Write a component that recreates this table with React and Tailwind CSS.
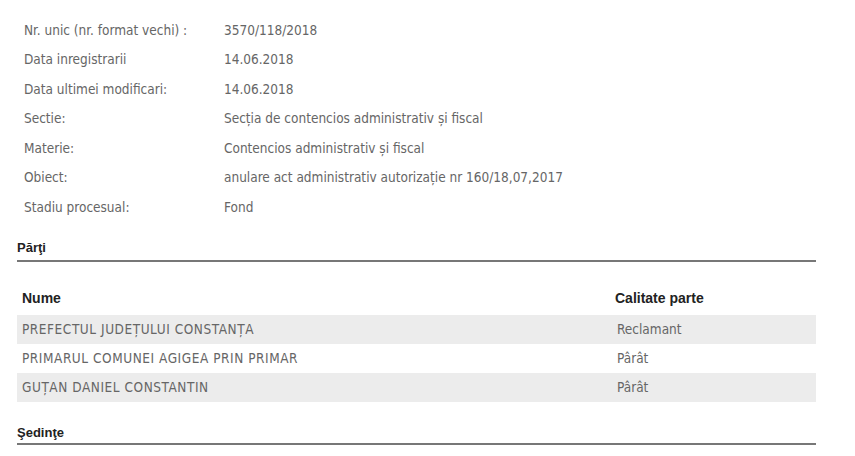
import React from "react";

const info = [
  ["Nr. unic (nr. format vechi) :", "3570/118/2018"],
  ["Data inregistrarii", "14.06.2018"],
  ["Data ultimei modificari:", "14.06.2018"],
  ["Sectie:", "Secția de contencios administrativ și fiscal"],
  ["Materie:", "Contencios administrativ și fiscal"],
  ["Obiect:", "anulare act administrativ autorizație nr 160/18,07,2017"],
  ["Stadiu procesual:", "Fond"],
];

const parti = [
  ["PREFECTUL JUDEȚULUI CONSTANȚA", "Reclamant", true],
  ["PRIMARUL COMUNEI AGIGEA PRIN PRIMAR", "Pârât", false],
  ["GUȚAN DANIEL CONSTANTIN", "Pârât", true],
];

const body = { fontFamily: '"DejaVu Sans Condensed", "DejaVu Sans", sans-serif' };
const head = { fontFamily: '"Liberation Sans", Arial, sans-serif' };

export default function App() {
  return (
    <div className="w-[855px] h-[456px] bg-white overflow-hidden">
      <div className="w-[799px] ml-[17px] pt-[15px]">
        <div className="pl-[7px] text-[13.5px] text-[#666]" style={body}>
          {info.map(([k, v]) => (
            <div key={k} className="flex items-center h-[29.5px]">
              <div className="w-[200px]">{k}</div>
              <div>{v}</div>
            </div>
          ))}
        </div>

        <div className="mt-[18.5px] border-b-2 border-[#777] pb-[4px]">
          <div className="text-[13px] font-bold text-[#222] leading-[16px]" style={head}>Părţi</div>
        </div>

        <div className="mt-[28px]">
          <div className="flex items-center pb-[9px] leading-[16px] text-[14px] font-bold text-[#222]" style={head}>
            <div className="w-[598px] pl-[5px]">Nume</div>
            <div>Calitate parte</div>
          </div>
          <div className="text-[13.5px] text-[#666]" style={body}>
            {parti.map(([n, c, shade]) => (
              <div key={n} className={`flex items-center h-[29px] ${shade ? "bg-[#ececec]" : "bg-white"}`}>
                <div className="w-[598px] pl-[5px] tracking-[0.55px]">{n}</div>
                <div className="pl-[2px]">{c}</div>
              </div>
            ))}
          </div>
        </div>

        <div className="mt-[23px] border-b-2 border-[#777] pb-[2px]">
          <div className="text-[13px] font-bold text-[#222] leading-[16px]" style={head}>Şedinţe</div>
        </div>
      </div>
    </div>
  );
}
